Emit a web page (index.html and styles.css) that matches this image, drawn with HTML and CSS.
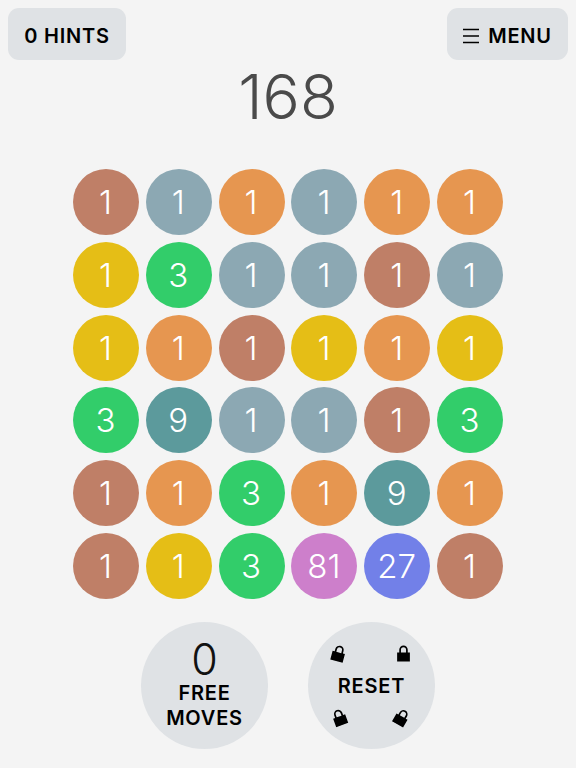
FILE: index.html
```html
<!DOCTYPE html>
<html lang="en">
<head>
    <meta charset="UTF-8">
    <meta name="viewport" content="width=device-width, initial-scale=1.0">
    <title>Merge Game</title>
    <link rel="stylesheet" href="styles.css">
</head>
<body>

<div class="header">
    <div class="button hints">0 HINTS</div>
    <div class="button menu">
        <svg class="menu-icon" width="16" height="16" viewBox="0 0 16 16">
            <path d="M0 1.5H16M0 8H16M0 14.5H16" stroke="#000" stroke-width="1.5"/>
        </svg>
        MENU
    </div>
</div>

<div class="score">168</div>

<div class="board">
    <div class="cell brown">1</div>
    <div class="cell slate">1</div>
    <div class="cell orange">1</div>
    <div class="cell slate">1</div>
    <div class="cell orange">1</div>
    <div class="cell orange">1</div>

    <div class="cell yellow">1</div>
    <div class="cell green">3</div>
    <div class="cell slate">1</div>
    <div class="cell slate">1</div>
    <div class="cell brown">1</div>
    <div class="cell slate">1</div>

    <div class="cell yellow">1</div>
    <div class="cell orange">1</div>
    <div class="cell brown">1</div>
    <div class="cell yellow">1</div>
    <div class="cell orange">1</div>
    <div class="cell yellow">1</div>

    <div class="cell green">3</div>
    <div class="cell teal">9</div>
    <div class="cell slate">1</div>
    <div class="cell slate">1</div>
    <div class="cell brown">1</div>
    <div class="cell green">3</div>

    <div class="cell brown">1</div>
    <div class="cell orange">1</div>
    <div class="cell green">3</div>
    <div class="cell orange">1</div>
    <div class="cell teal">9</div>
    <div class="cell orange">1</div>

    <div class="cell brown">1</div>
    <div class="cell yellow">1</div>
    <div class="cell green">3</div>
    <div class="cell pink">81</div>
    <div class="cell blue">27</div>
    <div class="cell brown">1</div>
</div>

<div class="controls">
    <div class="round-button free">
        <div class="free-count">0</div>
        <div class="round-label">FREE<br>MOVES</div>
    </div>
    <div class="round-button reset">
        <div class="round-label">RESET</div>
        <svg class="lock lock-1" viewBox="0 0 14 16"><path d="M1 7H3V4.5a4 4 0 0 1 8 0V7H13V15.5H1ZM4.6 7H9.4V4.5a2.4 2.4 0 0 0-4.8 0Z" fill-rule="evenodd"/></svg>
        <svg class="lock lock-2" viewBox="0 0 14 16"><path d="M1 7H3V4.5a4 4 0 0 1 8 0V7H13V15.5H1ZM4.6 7H9.4V4.5a2.4 2.4 0 0 0-4.8 0Z" fill-rule="evenodd"/></svg>
        <svg class="lock lock-3" viewBox="0 0 14 16"><path d="M1 7H3V4.5a4 4 0 0 1 8 0V7H13V15.5H1ZM4.6 7H9.4V4.5a2.4 2.4 0 0 0-4.8 0Z" fill-rule="evenodd"/></svg>
        <svg class="lock lock-4" viewBox="0 0 14 16"><path d="M1 7H3V4.5a4 4 0 0 1 8 0V7H13V15.5H1ZM4.6 7H9.4V4.5a2.4 2.4 0 0 0-4.8 0Z" fill-rule="evenodd"/></svg>
    </div>
</div>

</body>
</html>
```

FILE: styles.css
```css
body {
    font-family: Inter, "Liberation Sans", sans-serif;
    margin: 0;
    background-color: #f4f4f4;
    color: #000;
}

.header {
    display: flex;
    justify-content: space-between;
    padding: 8px 8px 0;
}

.button {
    display: flex;
    align-items: center;
    justify-content: center;
    box-sizing: border-box;
    height: 52px;
    padding-top: 3px;
    background-color: #dfe2e5;
    border-radius: 11px;
    font-size: 20px;
    font-weight: 600;
    letter-spacing: 0.8px;
}

.hints {
    width: 118px;
}

.menu {
    width: 121px;
}

.menu-icon {
    margin-right: 9px;
}

.score {
    height: 74px;
    text-align: center;
    font-size: 62px;
    font-weight: 300;
    line-height: 74px;
    color: #4a4a4a;
}

.board {
    display: grid;
    grid-template-columns: repeat(6, 66px);
    gap: 6.8px;
    justify-content: center;
    margin-top: 35px;
}

.cell {
    display: flex;
    align-items: center;
    justify-content: center;
    height: 66px;
    padding-right: 1px;
    border-radius: 50%;
    font-size: 33px;
    font-weight: 300;
    color: #fff;
}

.brown { background-color: #bf7f67; }
.slate { background-color: #8ca8b3; }
.orange { background-color: #e69650; }
.yellow { background-color: #e5be16; }
.green { background-color: #32cd6a; }
.teal { background-color: #5c9a9c; }
.pink { background-color: #cd7fcb; }
.blue { background-color: #7280e8; }

.controls {
    display: flex;
    justify-content: center;
    gap: 40px;
    margin-top: 23px;
}

.round-button {
    position: relative;
    display: flex;
    flex-direction: column;
    align-items: center;
    justify-content: center;
    box-sizing: border-box;
    width: 127px;
    height: 127px;
    background-color: #dfe2e5;
    border-radius: 50%;
}

.free {
    padding-bottom: 3px;
}

.reset {
    padding-top: 2px;
}

.free-count {
    font-size: 43px;
    font-weight: 300;
    line-height: 44px;
    color: #111;
}

.round-label {
    font-size: 20px;
    font-weight: 600;
    line-height: 24.5px;
    letter-spacing: 0.8px;
    text-align: center;
}

.lock {
    position: absolute;
    width: 15px;
    height: 17px;
}

.lock-1 { left: 23px; top: 23px; transform: rotate(15deg); }
.lock-2 { left: 88px; top: 23px; }
.lock-3 { left: 24px; top: 87px; transform: rotate(-20deg); }
.lock-4 { left: 86px; top: 87px; transform: rotate(30deg); }
```
